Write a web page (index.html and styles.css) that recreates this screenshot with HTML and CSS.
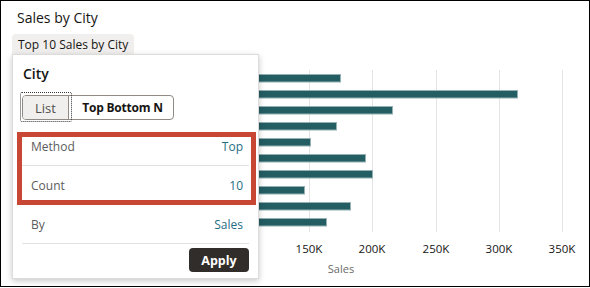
FILE: index.html
```html
<!DOCTYPE html>
<html>
<head>
<meta charset="utf-8">
<link rel="stylesheet" href="styles.css">
</head>
<body>
<div class="frame">
  <h1 class="title">Sales by City</h1>
  <div class="chart">
    <svg class="chart-svg" width="588" height="258" viewBox="1 28 588 258">
      <g class="grid">
        <line x1="309.5" y1="70" x2="309.5" y2="232"/>
        <line x1="372.5" y1="70" x2="372.5" y2="232"/>
        <line x1="436.5" y1="70" x2="436.5" y2="232"/>
        <line x1="499.5" y1="70" x2="499.5" y2="232"/>
        <line x1="562.5" y1="70" x2="562.5" y2="232"/>
      </g>
      <g class="bars">
        <rect x="119.5" y="74.5" width="221" height="7.5"/>
        <rect x="119.5" y="90.5" width="398" height="7.5"/>
        <rect x="119.5" y="106.5" width="273" height="7.5"/>
        <rect x="119.5" y="122.5" width="217" height="7.5"/>
        <rect x="119.5" y="138.5" width="191" height="7.5"/>
        <rect x="119.5" y="154.5" width="246" height="7.5"/>
        <rect x="119.5" y="170.5" width="253" height="7.5"/>
        <rect x="119.5" y="186.5" width="185" height="7.5"/>
        <rect x="119.5" y="202.5" width="231" height="7.5"/>
        <rect x="119.5" y="218.5" width="207" height="7.5"/>
      </g>
      <g class="ticks">
        <text x="309" y="253.3">150K</text>
        <text x="372" y="253.3">200K</text>
        <text x="436" y="253.3">250K</text>
        <text x="499" y="253.3">300K</text>
        <text x="562" y="253.3">350K</text>
      </g>
      <text class="axis-title" x="341" y="272.7">Sales</text>
    </svg>
  </div>

  <div class="filter">
    <div class="chip">Top 10 Sales by City</div>
    <div class="panel">
      <div class="panel-title">City</div>
      <div class="seg">
        <span class="seg-btn seg-selected">List</span>
        <span class="seg-btn seg-strong">Top Bottom N</span>
      </div>
      <ul class="props">
        <li class="prop"><span class="prop-label">Method</span><span class="prop-value">Top</span></li>
        <li class="prop"><span class="prop-label">Count</span><span class="prop-value">10</span></li>
        <li class="prop"><span class="prop-label">By</span><span class="prop-value">Sales</span></li>
      </ul>
      <div class="actions"><span class="apply">Apply</span></div>
      <div class="highlight"></div>
    </div>
  </div>
</div>
</body>
</html>
```

FILE: styles.css
```css
* { box-sizing: border-box; }
html, body { margin: 0; padding: 0; background: #fff; }
body { font-family: "Open Sans", "Noto Sans", sans-serif; color: #161513; }

.frame {
  position: relative;
  width: 590px;
  height: 287px;
  border: 1px solid #000;
  overflow: hidden;
}

.title {
  margin: 0;
  padding: 7px 16px 0;
  height: 27px;
  font-size: 14px;
  line-height: 20px;
  font-weight: 400;
  color: #161513;
}

.chart { display: block; }
.chart-svg { display: block; }
.grid line { stroke: #e4e4e4; stroke-width: 1; }
.bars rect { fill: #245e63; stroke: #93b0b2; stroke-width: 1; }
.ticks text {
  font-family: "Open Sans", sans-serif;
  font-size: 11.5px;
  fill: #161513;
  text-anchor: middle;
}
.axis-title {
  font-family: "Open Sans", sans-serif;
  font-size: 11px;
  fill: #6b6b6b;
  text-anchor: middle;
}

.filter {
  position: absolute;
  left: 11px;
  top: 33px;
  display: flex;
  flex-direction: column;
  align-items: flex-start;
}

.chip {
  height: 20px;
  padding: 0 6px;
  background: #f1efed;
  border-radius: 4px 4px 0 0;
  font-size: 12px;
  line-height: 21px;
  color: #161513;
}

.panel {
  position: relative;
  width: 247px;
  height: 225px;
  padding: 9px 9px 0;
  background: #fff;
  border: 1px solid #dcdcdc;
  box-shadow: 0 2px 6px rgba(0, 0, 0, 0.22);
}

.panel-title {
  font-size: 14px;
  line-height: 20px;
  font-weight: 600;
  padding-left: 1px;
  color: #161513;
}

.seg {
  display: flex;
  width: fit-content;
  margin-top: 11px;
  height: 25px;
  border: 1px solid #8f8a86;
  border-radius: 4px;
}

.seg-btn {
  display: flex;
  align-items: center;
  justify-content: center;
  font-size: 13px;
  color: #161513;
}

.seg-selected {
  position: relative;
  width: 46px;
  background: #f1efed;
  color: #4f4f4f;
  border-right: 1px solid #8f8a86;
  border-radius: 3px 0 0 3px;
}
.seg-selected::after {
  content: "";
  position: absolute;
  left: -3px;
  right: -4px;
  top: -4px;
  bottom: -3px;
  border: 1px dotted #333;
  border-radius: 2px;
}

.seg-strong {
  width: 104px;
  font-size: 12px;
  font-weight: 700;
  letter-spacing: -0.2px;
  padding-left: 3px;
}

.props {
  list-style: none;
  margin: 7px 0 0;
  padding: 0;
}

.prop {
  display: flex;
  justify-content: space-between;
  align-items: center;
  height: 39px;
  padding: 1px 6px 0 9px;
  border-bottom: 1px solid #e2e2e2;
  font-size: 12px;
}

.prop-label { color: #5c5c5c; }
.prop-value { color: #1f6e84; }

.actions {
  display: flex;
  justify-content: flex-end;
  margin-top: 4px;
}

.apply {
  display: flex;
  align-items: center;
  justify-content: center;
  width: 60px;
  height: 24px;
  background: #312d2a;
  color: #fff;
  border-radius: 4px;
  font-size: 12.5px;
  font-weight: 700;
}

.highlight {
  position: absolute;
  left: 4px;
  top: 77px;
  width: 239px;
  height: 73px;
  border: 5px solid #c74634;
}
```
